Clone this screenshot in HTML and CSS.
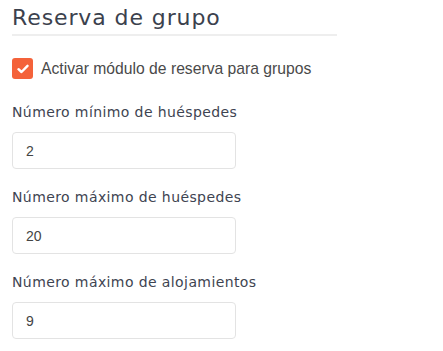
FILE: index.html
```html
<!DOCTYPE html>
<html lang="es">
<head>
  <meta charset="UTF-8" />
  <meta name="viewport" content="width=device-width, initial-scale=1.0" />
  <title>Reserva de grupo</title>
  <link rel="stylesheet" href="styles.css">
</head>
<body>
  <div class="panel">
    <h2 class="title">Reserva de grupo</h2>

    <label class="check">
      <span class="box">
        <svg width="12" height="10" viewBox="0 0 12 10"><path d="M1.5 5.2 L4.5 8 L10.5 1.8" fill="none" stroke="#fff" stroke-width="2.4" stroke-linecap="round" stroke-linejoin="round"/></svg>
      </span>
      Activar módulo de reserva para grupos
    </label>

    <div class="field">
      <label>Número mínimo de huéspedes</label>
      <input type="text" value="2" />
    </div>

    <div class="field">
      <label>Número máximo de huéspedes</label>
      <input type="text" value="20" />
    </div>

    <div class="field">
      <label>Número máximo de alojamientos</label>
      <input type="text" value="9" />
    </div>
  </div>
</body>
</html>
```

FILE: styles.css
```css
body {
  margin: 0;
  background: #fff;
  font-family: 'DejaVu Sans', sans-serif;
  color: #3e4451;
}
.panel { padding: 4px 0 0 12px; width: 325px; }
.title {
  margin: 0;
  font-size: 22px;
  font-weight: 400;
  letter-spacing: 0.9px;
  color: #3b414d;
  padding-bottom: 2px;
  border-bottom: 2px solid #eee;
  line-height: 28px;
}
.check {
  display: flex;
  align-items: center;
  gap: 8px;
  margin-top: 22px;
  font-family: 'Liberation Sans', Arial, sans-serif;
  font-size: 15.7px;
  color: #4a4a4a;
}
.box {
  width: 21px;
  height: 21px;
  border-radius: 3px;
  background: #f4623a;
  display: flex;
  align-items: center;
  justify-content: center;
}
.field { margin-top: 18px; }
.check + .field { margin-top: 23px; }
.field label {
  display: block;
  font-size: 14px;
  letter-spacing: 0.4px;
  color: #3e4451;
  line-height: 20px;
}
.field input {
  display: block;
  margin-top: 10px;
  width: 224px;
  height: 37px;
  box-sizing: border-box;
  border: 1px solid #e3e3e3;
  border-radius: 4px;
  padding: 0 13px;
  font-family: 'Liberation Sans', Arial, sans-serif;
  font-size: 14px;
  color: #444;
  outline: none;
}
```
